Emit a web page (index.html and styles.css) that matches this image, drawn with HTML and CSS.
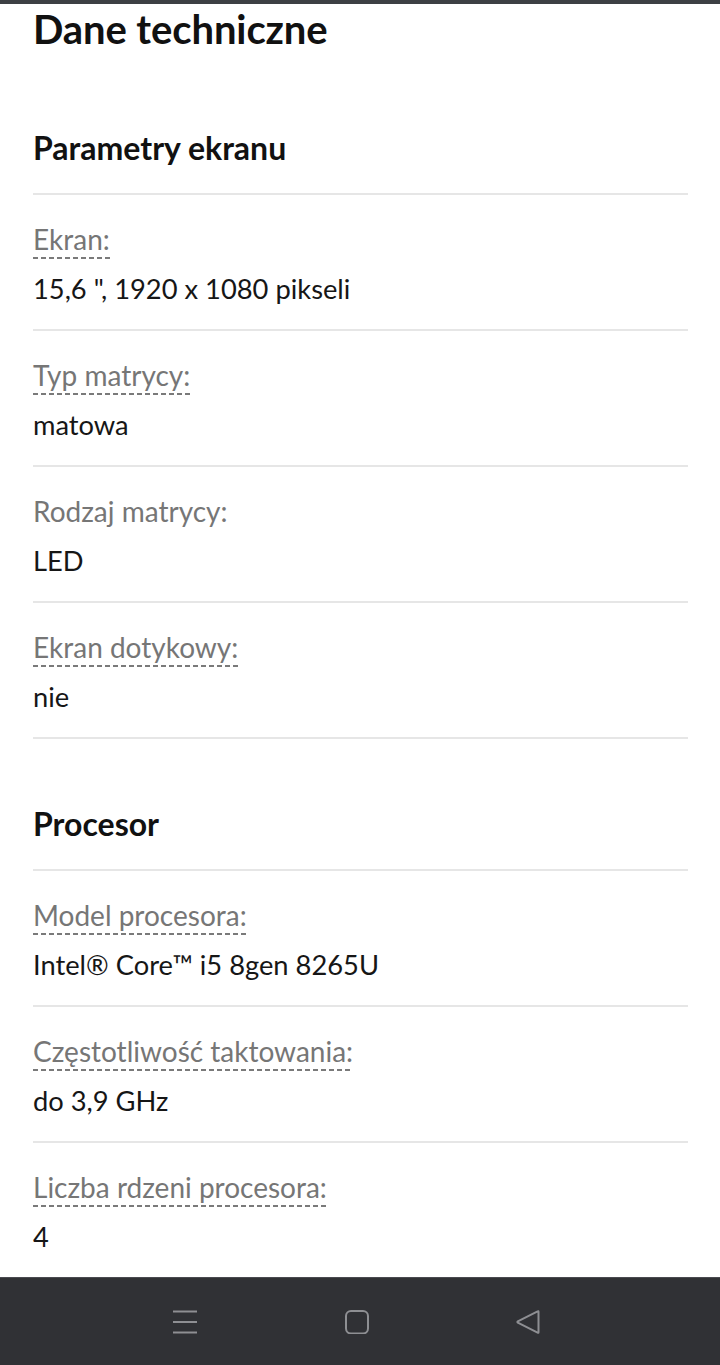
FILE: index.html
```html
<!DOCTYPE html>
<html lang="pl">
<head>
<meta charset="utf-8">
<title>Dane techniczne</title>
<link rel="stylesheet" href="styles.css">
</head>
<body>
<div class="topbar"></div>
<main class="page">
  <h1 class="title">Dane techniczne</h1>

  <section class="section section-first">
    <h2 class="section-title">Parametry ekranu</h2>
    <div class="row">
      <div class="label"><span class="hint">Ekran:</span></div>
      <div class="value">15,6 ", 1920 x 1080 pikseli</div>
    </div>
    <div class="row">
      <div class="label"><span class="hint">Typ matrycy:</span></div>
      <div class="value">matowa</div>
    </div>
    <div class="row">
      <div class="label">Rodzaj matrycy:</div>
      <div class="value">LED</div>
    </div>
    <div class="row">
      <div class="label"><span class="hint">Ekran dotykowy:</span></div>
      <div class="value">nie</div>
    </div>
  </section>

  <section class="section">
    <h2 class="section-title">Procesor</h2>
    <div class="row">
      <div class="label"><span class="hint">Model procesora:</span></div>
      <div class="value">Intel® Core™ i5 8gen 8265U</div>
    </div>
    <div class="row">
      <div class="label"><span class="hint">Częstotliwość taktowania:</span></div>
      <div class="value">do 3,9 GHz</div>
    </div>
    <div class="row">
      <div class="label"><span class="hint">Liczba rdzeni procesora:</span></div>
      <div class="value">4</div>
    </div>
  </section>
</main>
<nav class="navbar">
  <svg class="nav-icon" width="24" height="24" viewBox="0 0 24 24"><g stroke="#8e8f93" stroke-width="2" fill="none"><line x1="0" y1="1.5" x2="24" y2="1.5"/><line x1="0" y1="12" x2="24" y2="12"/><line x1="0" y1="22.5" x2="24" y2="22.5"/></g></svg>
  <svg class="nav-icon" width="24" height="24" viewBox="0 0 24 24"><rect x="1" y="1" width="22" height="22.5" rx="5" stroke="#8e8f93" stroke-width="2" fill="none"/></svg>
  <svg class="nav-icon" width="24" height="24" viewBox="0 0 24 24"><path d="M22.5 1.8 V22.2 Q22.5 23.2 21.6 22.7 L1.8 12.7 Q1 12 1.8 11.3 L21.6 1.3 Q22.5 0.8 22.5 1.8 Z" stroke="#8e8f93" stroke-width="2" fill="none" stroke-linejoin="round"/></svg>
</nav>
</body>
</html>
```

FILE: styles.css
```css
html, body {
  margin: 0;
  padding: 0;
  background: #ffffff;
}
body {
  font-family: Lato, "Open Sans", Arial, sans-serif;
  color: #111111;
  width: 720px;
  height: 1365px;
  overflow: hidden;
  position: relative;
}
.topbar {
  height: 4px;
  background: #3d4044;
}
.page {
  padding: 0 32px 0 33px;
}
.title {
  margin: 0;
  padding-top: 1px;
  font-size: 40px;
  font-weight: 700;
  line-height: 48px;
  color: #111111;
  letter-spacing: -0.1px;
}
.section {
  padding-top: 65px;
}
.section-first {
  padding-top: 75px;
}
.section-title {
  margin: 0;
  font-size: 32px;
  font-weight: 700;
  line-height: 40px;
  padding-bottom: 25px;
  border-bottom: 2px solid #e6e6e6;
  color: #111111;
}
.row {
  padding: 20px 0 16px;
  border-bottom: 2px solid #e6e6e6;
  font-size: 27.3px;
  line-height: 49px;
}
.label {
  color: #767676;
  font-size: 28px;
}
.hint {
  padding-bottom: 3px;
  background-image: linear-gradient(to right, #7a7a7a 62%, transparent 62%);
  background-repeat: repeat-x;
  background-position: left bottom;
  background-size: 8px 2px;
}
.value {
  color: #161616;
}
.navbar {
  position: absolute;
  left: 0;
  right: 0;
  bottom: 0;
  height: 88px;
  background: #303135;
  border-top: 1px solid #4a4b50;
  display: flex;
  align-items: center;
  justify-content: center;
  gap: 147.5px;
  padding-right: 7px;
  box-sizing: border-box;
}
.nav-icon {
  display: block;
}
```
